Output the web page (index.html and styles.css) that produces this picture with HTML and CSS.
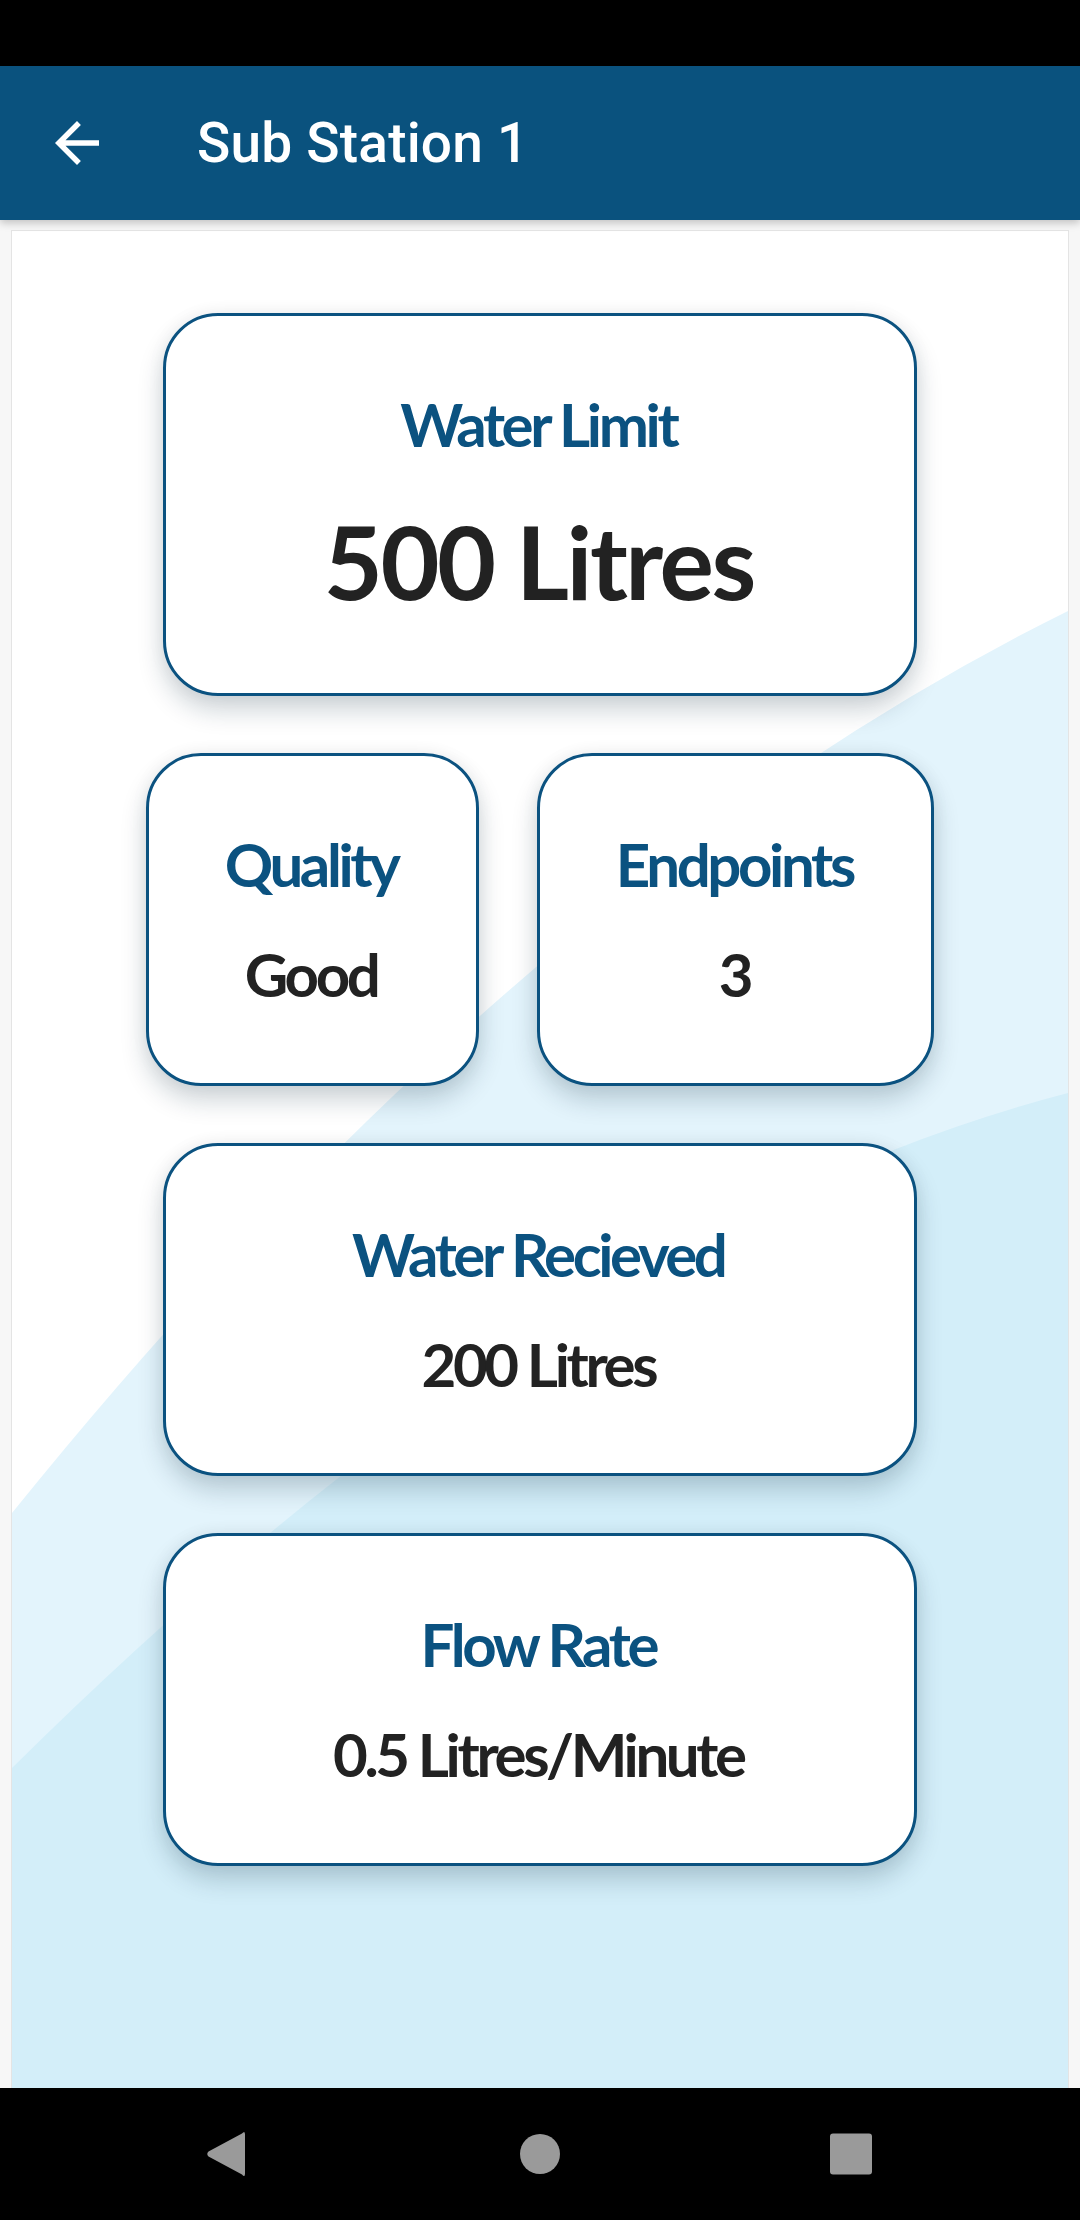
FILE: index.html
```html
<!DOCTYPE html>
<html>
<head>
<meta charset="utf-8">
<link rel="stylesheet" href="styles.css">
</head>
<body>
<div class="status-bar"></div>
<header class="app-bar">
  <span class="back-btn">
    <svg viewBox="0 0 24 24" width="66" height="66"><path fill="#ffffff" d="M20 11H7.83l5.59-5.59L12 4l-8 8 8 8 1.41-1.41L7.83 13H20v-2z"/></svg>
  </span>
  <h1 class="title">Sub Station 1</h1>
</header>
<main class="content">
  <section class="panel">
    <svg class="waves" viewBox="0 0 1080 2220" width="1080" height="2220">
      <path fill="#e3f4fc" d="M0 1528 Q520 878 1080 605 L1080 2220 L0 2220 Z"/>
      <path fill="#d3eef9" d="M0 1780 Q560 1220 1080 1090 L1080 2220 L0 2220 Z"/>
    </svg>
    <div class="cards">
      <div class="card wide first">
        <div class="card-title">Water Limit</div>
        <div class="card-value big">500 Litres</div>
      </div>
      <div class="row">
        <div class="card small">
          <div class="card-title">Quality</div>
          <div class="card-value">Good</div>
        </div>
        <div class="card small">
          <div class="card-title">Endpoints</div>
          <div class="card-value">3</div>
        </div>
      </div>
      <div class="card wide">
        <div class="card-title">Water Recieved</div>
        <div class="card-value">200 Litres</div>
      </div>
      <div class="card wide">
        <div class="card-title">Flow Rate</div>
        <div class="card-value">0.5 Litres/Minute</div>
      </div>
    </div>
  </section>
</main>
<nav class="nav-bar">
  <span class="nav-btn">
    <svg viewBox="0 0 66 66" width="66" height="66"><path fill="#9a9a9a" d="M49 12.5 Q52 9 52 13.5 L52 52.5 Q52 57 49 53.5 L15.5 35.5 Q13 33 15.5 30.5 Z"/></svg>
  </span>
  <span class="nav-btn">
    <svg viewBox="0 0 66 66" width="66" height="66"><circle cx="33" cy="33" r="20" fill="#9a9a9a"/></svg>
  </span>
  <span class="nav-btn">
    <svg viewBox="0 0 66 66" width="66" height="66"><rect x="9" y="12.5" width="42" height="41" rx="3" fill="#9a9a9a"/></svg>
  </span>
</nav>
</body>
</html>
```
FILE: styles.css
```css
html, body {
  margin: 0;
  padding: 0;
  background: #000;
}
body {
  width: 1080px;
  height: 2220px;
  overflow: hidden;
  display: flex;
  flex-direction: column;
  font-family: "Lato", "Roboto", sans-serif;
}
.status-bar {
  height: 66px;
  background: #000;
  flex: none;
}
.app-bar {
  height: 154px;
  flex: none;
  background: #0a527e;
  display: flex;
  align-items: center;
  position: relative;
  z-index: 2;
  box-shadow: 0 3px 8px rgba(0, 0, 0, 0.22);
}
.back-btn {
  width: 66px;
  height: 66px;
  margin-left: 44px;
  display: flex;
}
.title {
  margin: 0 0 0 87px;
  font-family: "Roboto", sans-serif;
  font-weight: 500;
  font-size: 55px;
  color: #fff;
  letter-spacing: 0.2px;
}
.content {
  height: 1868px;
  flex: none;
  background: #f7f7f7;
  padding: 10px 11px 0;
  box-sizing: border-box;
  overflow: hidden;
}
.panel {
  position: relative;
  overflow: hidden;
  background: #fff;
  border: 1px solid #e4e4e4;
  height: 1900px;
  box-sizing: border-box;
}
.waves {
  position: absolute;
  left: -12px;
  top: -231px;
  z-index: 0;
}
.cards {
  position: relative;
  z-index: 1;
  display: flex;
  flex-direction: column;
  align-items: center;
  gap: 57px;
  padding-top: 82px;
}
.row {
  display: flex;
  gap: 58px;
}
.card {
  background: #fff;
  border: 3px solid #0b5280;
  border-radius: 55px;
  padding: 72px 0 73px;
  display: flex;
  flex-direction: column;
  align-items: center;
  gap: 38px;
  box-shadow: 0 14px 26px rgba(10, 40, 60, 0.2), 0 0 18px rgba(0, 0, 0, 0.05);
  box-sizing: border-box;
}
.card.wide {
  width: 754px;
}
.card.first {
  gap: 41px;
}
.card.small {
  padding: 72px 75px 73px 76px;
}
.card-title,
.card-value {
  font-weight: 700;
  font-size: 60px;
  line-height: 72px;
  letter-spacing: -3.4px;
  white-space: nowrap;
  padding-right: 3.4px;
}
.card-title {
  color: #0b5280;
}
.card-value {
  color: #222;
}
.card-value.big {
  font-size: 102px;
  line-height: 119px;
  letter-spacing: -2.5px;
  padding-right: 2.5px;
}
.nav-bar {
  height: 132px;
  flex: none;
  background: #000;
  display: flex;
  justify-content: center;
  align-items: center;
  gap: 248px;
}
.nav-btn {
  width: 66px;
  height: 66px;
  display: flex;
}
```
